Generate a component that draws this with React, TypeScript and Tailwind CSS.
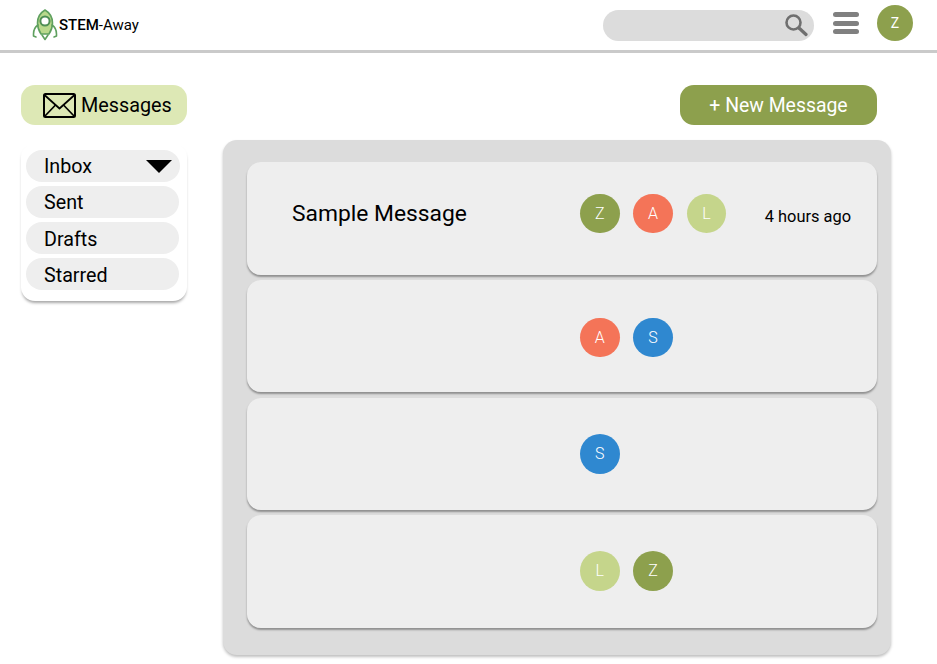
import React from 'react';

const OLIVE = 'bg-[#8da04d]';
const CORAL = 'bg-[#f47458]';
const LIME = 'bg-[#c5d58b]';
const BLUE = 'bg-[#2f88d0]';

const Avatar = ({ letter, color }: { letter: string; color: string }) => (
  <div className={`flex h-[39.5px] w-[39.5px] shrink-0 items-center justify-center rounded-full text-[16px] font-light text-white ${color}`}>
    {letter}
  </div>
);

const Logo = () => (
  <svg width="26" height="32" viewBox="0 0 26 32" fill="none" stroke="#5fa05f" strokeWidth="1.6" strokeLinejoin="round" strokeLinecap="round">
    <path d="M13 1 C8 4 5.5 9 5.5 14 C5.5 18 7 22 9 25 L17 25 C19 22 20.5 18 20.5 14 C20.5 9 18 4 13 1 Z" fill="#b9d98c" />
    <circle cx="13" cy="12" r="4.6" fill="#ffffff" strokeWidth="2" stroke="#4f8f55" />
    <path d="M6 16 C3 18 1.5 21 1.5 25 L1.5 27 L4 28" />
    <path d="M20 16 C23 18 24.5 21 24.5 25 L24.5 27 L22 28" />
    <path d="M10 26 L13 30.5 L16 26" />
  </svg>
);

const SearchIcon = () => (
  <svg width="24" height="24" viewBox="0 0 24 24" fill="none" stroke="#6f6f6f" strokeLinecap="round">
    <circle cx="9.5" cy="9.5" r="7" strokeWidth="2.6" />
    <path d="M15 15 L22 21.5" strokeWidth="3.2" />
  </svg>
);

const Envelope = () => (
  <svg width="33" height="25" viewBox="0 0 33 25" fill="none" stroke="#000000" strokeWidth="1.7" strokeLinejoin="round">
    <rect x="1" y="1" width="31" height="23" rx="1.5" strokeWidth="2" />
    <path d="M1.5 2 L16.5 15.5 L31.5 2" />
    <path d="M1.5 23.5 L12.5 12" />
    <path d="M31.5 23.5 L20.5 12" />
  </svg>
);

const Folder = ({ label, arrow, low }: { label: string; arrow?: boolean; low?: boolean }) => (
  <div className={`flex h-[32px] items-center justify-between rounded-[16px] bg-[#eeeeee] pl-[18px] pr-[8px] text-[19.7px] text-black ${arrow ? 'w-[154px]' : 'w-[153px]'}`}>
    <span className={low ? 'pt-[4px]' : 'pt-[2px]'}>{label}</span>
    {arrow && (
      <svg width="26" height="13" viewBox="0 0 26 13" fill="#000000">
        <path d="M0 0 H26 L13 13 Z" />
      </svg>
    )}
  </div>
);

const rows = [
  { h: 'h-[113px]', mt: 'mt-0', pb: 'pb-[10px]', people: [['Z', OLIVE], ['A', CORAL], ['L', LIME]], title: 'Sample Message', time: '4 hours ago' },
  { h: 'h-[112px]', mt: 'mt-[5px]', pb: 'pt-[3px]', people: [['A', CORAL], ['S', BLUE]] },
  { h: 'h-[112px]', mt: 'mt-[6px]', pb: 'pb-0', people: [['S', BLUE]] },
  { h: 'h-[113px]', mt: 'mt-[5px]', pb: 'pb-[1px]', people: [['L', LIME], ['Z', OLIVE]] },
];

export default function App() {
  return (
    <div className="h-[664px] w-[937px] overflow-hidden bg-white font-['Roboto',sans-serif] text-black">
      {/* Header */}
      <header className="flex h-[53px] items-center border-b-[3px] border-[#cacaca] pl-[32px] pr-[24px]">
        <Logo />
        <span className="ml-[1px] text-[15px]">
          <span className="font-medium">STEM</span>-Away
        </span>
        <div className="ml-auto flex h-[31px] w-[211px] items-center justify-end rounded-[16px] bg-[#dcdcdc] pr-[6px]">
          <SearchIcon />
        </div>
        <div className="mb-[4px] ml-[19px] flex w-[26px] flex-col gap-[3.5px]">
          <div className="h-[5px] rounded-full bg-[#808080]" />
          <div className="h-[5px] rounded-full bg-[#808080]" />
          <div className="h-[5px] rounded-full bg-[#808080]" />
        </div>
        <div className={`mb-[4px] ml-[18px] flex h-[36px] w-[36px] items-center justify-center rounded-full text-[14px] text-white ${OLIVE}`}>
          Z
        </div>
      </header>

      <div className="flex pl-[21px] pt-[32px]">
        {/* Left column */}
        <aside className="w-[166px]">
          <div className="flex h-[40px] items-center rounded-[14px] bg-[#dde8b5] pl-[22px] text-[19.8px]">
            <Envelope />
            <span className="ml-[5px] pt-[2px]">Messages</span>
          </div>
          <div className="mt-[18px] flex h-[158px] flex-col gap-[4px] rounded-[14px] bg-white pl-[5px] pt-[7px] shadow-[0_3px_3px_-1px_rgba(0,0,0,0.35)]">
            <Folder label="Inbox" arrow />
            <Folder label="Sent" />
            <Folder label="Drafts" low />
            <Folder label="Starred" low />
          </div>
        </aside>

        {/* Right column */}
        <main className="ml-[36px] w-[668px]">
          <div className="flex justify-end pr-[14px]">
            <button className={`h-[40px] w-[197px] rounded-[14px] pt-[2px] text-[19.4px] text-white ${OLIVE}`}>+ New Message</button>
          </div>
          <div className="mt-[15px] h-[515px] rounded-[14px] bg-[#dcdcdc] pl-[24px] pt-[22px] shadow-[0_2px_3px_rgba(0,0,0,0.25)]">
            {rows.map((row, i) => (
              <div
                key={i}
                className={`flex w-[630px] items-center rounded-[14px] bg-[#eeeeee] shadow-[0_2px_2px_rgba(0,0,0,0.35)] ${row.h} ${row.mt} ${row.pb}`}
              >
                <div className="w-[333px] shrink-0 pl-[45px] pt-[1px] text-[22.8px]">{row.title}</div>
                <div className="flex gap-[13.8px]">
                  {row.people.map(([letter, color]) => (
                    <Avatar key={letter} letter={letter} color={color} />
                  ))}
                </div>
                {row.time && <span className="ml-auto mt-[8px] pr-[26px] text-[16.4px]">{row.time}</span>}
              </div>
            ))}
          </div>
        </main>
      </div>
    </div>
  );
}
